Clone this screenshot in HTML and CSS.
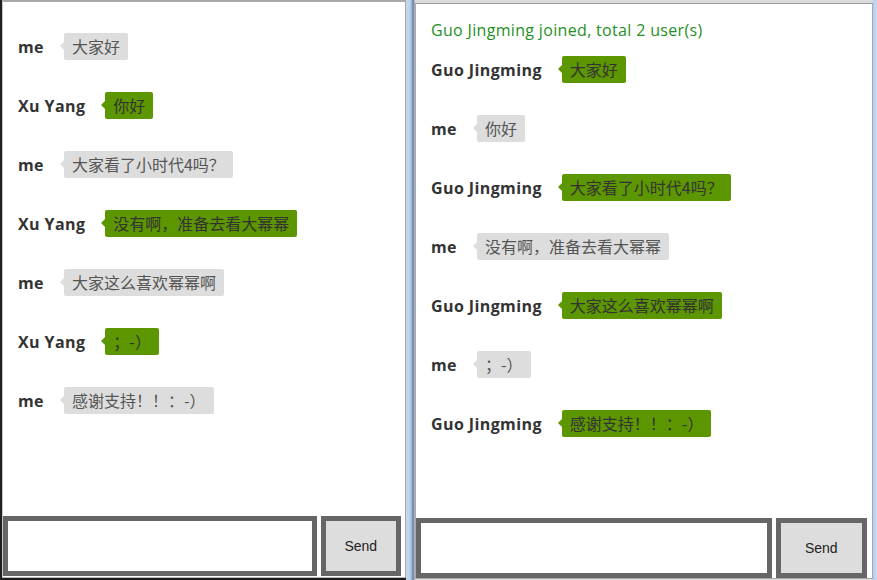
FILE: index.html
```html
<!DOCTYPE html>
<html lang="zh">
<head>
<meta charset="utf-8">
<title>Chat</title>
<link rel="stylesheet" href="styles.css">
</head>
<body>
<div class="desktop">
  <div class="edge-dark"></div>
  <div class="window window-left">
    <div class="pane">
      <div class="messages messages-left">
        <div class="msg"><span class="name">me</span><span class="bubble mine">大家好</span></div>
        <div class="msg"><span class="name">Xu Yang</span><span class="bubble other">你好</span></div>
        <div class="msg"><span class="name">me</span><span class="bubble mine">大家看了小时代4吗？</span></div>
        <div class="msg"><span class="name">Xu Yang</span><span class="bubble other">没有啊，准备去看大幂幂</span></div>
        <div class="msg"><span class="name">me</span><span class="bubble mine">大家这么喜欢幂幂啊</span></div>
        <div class="msg"><span class="name">Xu Yang</span><span class="bubble other">；-）</span></div>
        <div class="msg"><span class="name">me</span><span class="bubble mine">感谢支持！！：-）</span></div>
      </div>
      <div class="composer">
        <input class="input" type="text">
        <button class="send">Send</button>
      </div>
    </div>
  </div>
  <div class="frame-mid"></div>
  <div class="window window-right">
    <div class="pane">
      <div class="messages messages-right">
        <div class="join">Guo Jingming joined, total 2 user(s)</div>
        <div class="list">
          <div class="msg"><span class="name">Guo Jingming</span><span class="bubble other">大家好</span></div>
          <div class="msg"><span class="name">me</span><span class="bubble mine">你好</span></div>
          <div class="msg"><span class="name">Guo Jingming</span><span class="bubble other">大家看了小时代4吗？</span></div>
          <div class="msg"><span class="name">me</span><span class="bubble mine">没有啊，准备去看大幂幂</span></div>
          <div class="msg"><span class="name">Guo Jingming</span><span class="bubble other">大家这么喜欢幂幂啊</span></div>
          <div class="msg"><span class="name">me</span><span class="bubble mine">；-）</span></div>
          <div class="msg"><span class="name">Guo Jingming</span><span class="bubble other">感谢支持！！：-）</span></div>
        </div>
      </div>
      <div class="composer">
        <input class="input" type="text">
        <button class="send">Send</button>
      </div>
    </div>
  </div>
  <div class="frame-right"></div>
</div>
</body>
</html>
```
FILE: styles.css
```css
* { box-sizing: border-box; }
html, body { margin: 0; padding: 0; }
body {
  width: 877px;
  height: 580px;
  overflow: hidden;
  background: #1c1c1c;
  font-family: "Open Sans", "Noto Sans CJK SC", sans-serif;
}
.desktop {
  display: flex;
  height: 580px;
}
.edge-dark {
  width: 2px;
  background: #202020;
}
.window-left {
  width: 404px;
  height: 578px;
  border-top: 2px solid #a9a9a9;
  border-left: 1px solid #c8c8c8;
  border-right: 1px solid #a8a8a8;
  border-bottom: 1px solid #b8b8b8;
  background: #fff;
}
.frame-mid {
  width: 9px;
  background: linear-gradient(to right, #c5d9ee 0, #bcd3ec 40%, #9db8d8 60%, #6c7f96 80%, #b9c6d4 100%);
}
.window-right {
  width: 458px;
  height: 580px;
  padding-top: 3px;
  background: #dcdcdc;
  display: flex;
  flex-direction: column;
}
.window-right .pane {
  border-top: 1px solid #9c9c9c;
  border-left: 1px solid #a8a8a8;
  border-right: 1px solid #a8a8a8;
  border-bottom: 1px solid #a8a8a8;
  background: #fff;
  height: 576px;
}
.frame-right {
  width: 4px;
  background: linear-gradient(to right, #b6cde6, #c9dbef);
}
.pane {
  display: flex;
  flex-direction: column;
  height: 574px;
  background: #fff;
}
.messages {
  flex: 1;
  display: flex;
  flex-direction: column;
  padding-left: 15px;
}
.messages-left {
  padding-top: 31px;
  gap: 32px;
}
.list {
  display: flex;
  flex-direction: column;
  gap: 32px;
}
.join {
  color: #1f8f1f;
  font-size: 16px;
  letter-spacing: 0.33px;
  line-height: 27px;
  margin: 13px 0 12px;
}
.msg {
  display: flex;
  align-items: center;
  height: 27px;
}
.name {
  font-weight: bold;
  font-size: 16px;
  letter-spacing: 0.4px;
  color: #333;
  margin-right: 20px;
}
.bubble {
  position: relative;
  font-family: "Noto Sans CJK SC", sans-serif;
  font-size: 16px;
  line-height: 21px;
  padding: 3px 8px;
  border-radius: 2px;
}
.bubble::before {
  content: "";
  position: absolute;
  left: -4px;
  top: 9px;
  border-top: 4px solid transparent;
  border-bottom: 4px solid transparent;
  border-right: 4px solid;
}
.mine {
  background: #dddddd;
  color: #555;
}
.mine::before { border-right-color: #dddddd; }
.other {
  background: #5c9600;
  color: #333;
}
.other::before { border-right-color: #5c9600; }
.composer {
  display: flex;
  gap: 4px;
  height: 60px;
}
.input {
  width: 78%;
  height: 60px;
  border: 5px solid #666;
  background: #fff;
  margin: 0;
  padding: 0 4px;
  outline: none;
}
.send {
  width: 20%;
  height: 60px;
  border: 5px solid #666;
  background: #dddddd;
  color: #222;
  font-family: "Liberation Sans", Arial, sans-serif;
  font-size: 14px;
  margin: 0;
  padding: 0;
}
```
